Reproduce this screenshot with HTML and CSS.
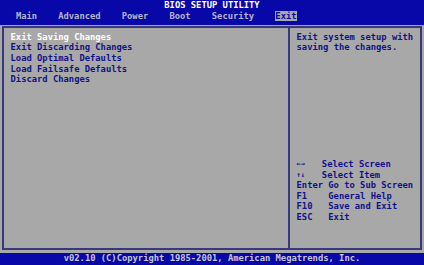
FILE: index.html
```html
<!DOCTYPE html>
<html lang="en">
<head>
    <meta charset="UTF-8">
    <meta name="viewport" content="width=device-width, initial-scale=1.0">
    <title>BIOS Setup Utility</title>
    <link rel="stylesheet" href="styles.css">
</head>
<body>
    <div class="header">
        <div class="title">BIOS SETUP UTILITY</div>
        <div class="menu">
            <span class="tab">Main</span>
            <span class="tab">Advanced</span>
            <span class="tab">Power</span>
            <span class="tab">Boot</span>
            <span class="tab">Security</span>
            <span class="tab active">Exit</span>
        </div>
    </div>

    <div class="main">
        <div class="box">
            <div class="options">
                <div class="option selected">Exit Saving Changes</div>
                <div class="option">Exit Discarding Changes</div>
                <div class="option">Load Optimal Defaults</div>
                <div class="option">Load Failsafe Defaults</div>
                <div class="option">Discard Changes</div>
            </div>
            <div class="help">
                <div class="help-text">
                    <div>Exit system setup with</div>
                    <div>saving the changes.</div>
                </div>
                <div class="keys">
                    <div class="key-row"><span class="key arrows">&larr;&rarr;</span><span>Select Screen</span></div>
                    <div class="key-row"><span class="key arrows">&uarr;&darr;</span><span>Select Item</span></div>
                    <div class="key-row"><span class="key">Enter</span><span>Go to Sub Screen</span></div>
                    <div class="key-row"><span class="key">F1</span><span>General Help</span></div>
                    <div class="key-row"><span class="key">F10</span><span>Save and Exit</span></div>
                    <div class="key-row"><span class="key">ESC</span><span>Exit</span></div>
                </div>
            </div>
        </div>
    </div>

    <div class="footer">v02.10 (C)Copyright 1985-2001, American Megatrends, Inc.</div>
</body>
</html>
```

FILE: styles.css
```css
:root {
    --row: 10.6px;
    --blue: #0808a8;
    --grey: #a8a8a8;
    --ink: #12128a;
    --line: #38387c;
}
* {
    box-sizing: border-box;
}
body {
    margin: 0;
    width: 424px;
    height: 265px;
    display: flex;
    flex-direction: column;
    background: var(--grey);
    color: var(--ink);
    font-family: 'DejaVu Sans Mono', 'Liberation Mono', monospace;
    font-weight: bold;
    font-size: 8.8px;
    line-height: var(--row);
    overflow: hidden;
}
.header {
    background: var(--blue);
    height: 25px;
}
.title {
    text-align: center;
    color: #ffffff;
}
.menu {
    display: flex;
    gap: 4ch;
    padding-left: 3ch;
    color: #b4b4cc;
}
.tab.active {
    background: var(--grey);
    color: var(--blue);
}
.main {
    flex: 1;
    display: flex;
    padding: 1px calc(0.5ch - 1px) 3px;
}
.box {
    flex: 1;
    display: flex;
    border: 2px solid var(--line);
    padding-top: 3.8px;
}
.options {
    width: calc(54ch - 2px);
    padding-left: calc(1.5ch - 1px);
}
.option.selected {
    color: #ffffff;
}
.help {
    flex: 1;
    border-left: 2px solid var(--line);
    margin-top: -3.8px;
    padding-top: 3.8px;
    padding-left: calc(1.5ch - 1px);
}
.keys {
    margin-top: calc(var(--row) * 10);
}
.key-row {
    display: flex;
}
.key {
    width: 6ch;
    flex-shrink: 0;
}
.arrows {
    font-size: 7px;
}
.footer {
    background: var(--blue);
    height: 11.7px;
    line-height: 11.7px;
    text-align: center;
    color: #c4c4d4;
}
```
